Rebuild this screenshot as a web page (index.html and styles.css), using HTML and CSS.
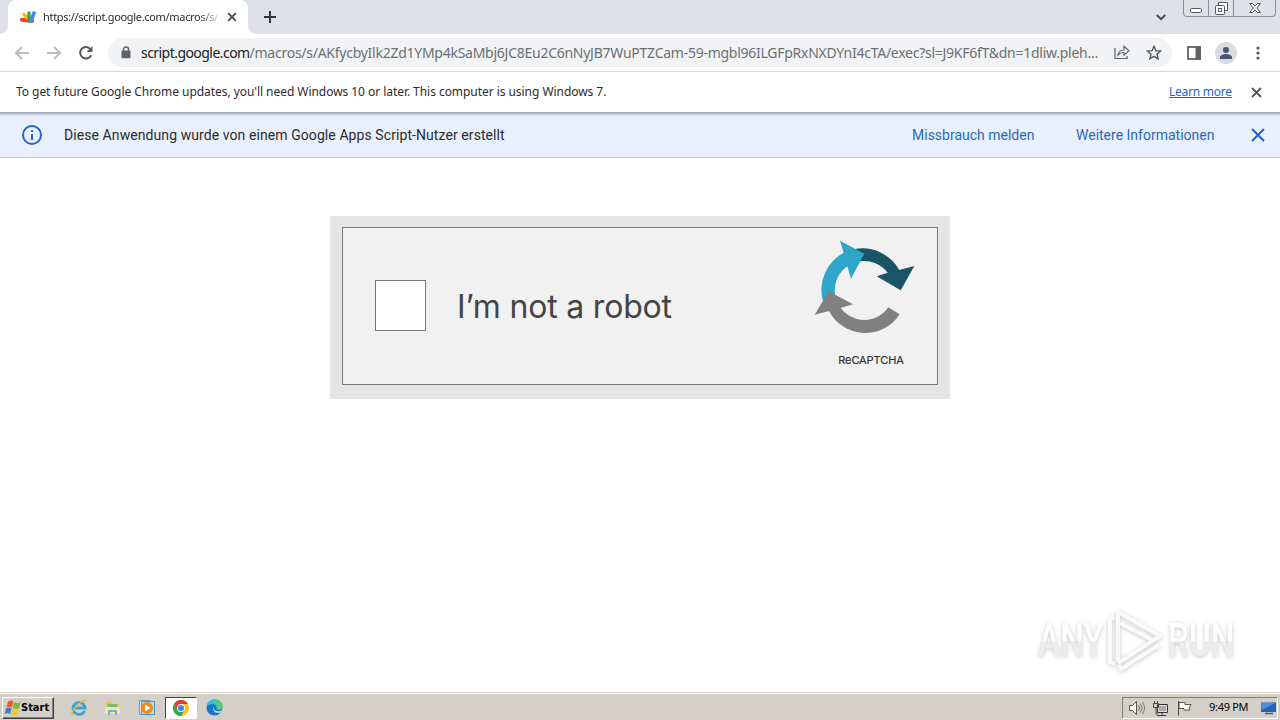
FILE: index.html
```
<!DOCTYPE html>
<html lang="de">

<head>
    <meta charset="UTF-8">
    <meta name="viewport" content="width=device-width, initial-scale=1">
    <title>script.google.com</title>
    <link rel="stylesheet" href="styles.css">
</head>

<body>

    <header class="tabstrip">
        <div class="tab">
            <svg class="favicon" width="16" height="14" viewBox="0 0 16 14">
                <path d="M2 9.800 12 11" stroke="#ea4335" stroke-width="4" stroke-linecap="round" />
                <path d="M4 4.500 11 11" stroke="#fbbc04" stroke-width="3.400" stroke-linecap="round" />
                <path d="M9 3v8" stroke="#34a853" stroke-width="3.400" stroke-linecap="round" />
                <path d="M14 3l-3 8" stroke="#4285f4" stroke-width="3.600" stroke-linecap="round" />
            </svg>
            <span class="tab-title">https://script.google.com/macros/s/</span>
            <svg class="tab-close" width="10" height="10" viewBox="0 0 10 10">
                <path d="M1.200 1.200l7.600 7.600M8.800 1.200l-7.600 7.600" />
            </svg>
        </div>
        <svg class="new-tab" width="12" height="12" viewBox="0 0 12 12">
            <path d="M6 0v12M0 6h12" />
        </svg>
        <svg class="tab-search" width="10" height="7" viewBox="0 0 10 7">
            <path d="M.8 1 5 5.200 9.200 1" />
        </svg>
        <div class="window-buttons">
            <span class="win-btn">
                <svg width="12" height="5" viewBox="0 0 12 5"><rect x=".5" y=".5" width="11" height="4" rx="1" /></svg>
            </span>
            <span class="win-btn">
                <svg width="13" height="13" viewBox="0 0 13 13">
                    <path d="M3.500 3.500v-3h9v8h-3" />
                    <rect x=".5" y="3.500" width="9" height="9" rx="1" />
                    <rect x="3.500" y="6.500" width="3" height="3" />
                </svg>
            </span>
            <span class="win-btn wide">
                <svg width="12" height="10" viewBox="0 0 12 10">
                    <path d="M.7.500h3L6 3 8.300.500h3L7.800 5l3.500 4.500h-3L6 7 3.700 9.500h-3L4.200 5z" />
                </svg>
            </span>
        </div>
    </header>

    <div class="toolbar">
        <svg class="nav-icon off" width="16" height="14" viewBox="0 0 16 14"><path d="M15 7H2M8 1 2 7l6 6" /></svg>
        <svg class="nav-icon off" width="16" height="14" viewBox="0 0 16 14"><path d="M1 7h13M8 1l6 6-6 6" /></svg>
        <svg class="nav-icon reload" width="16" height="16" viewBox="0 0 16 16">
            <path d="M13.200 10.200A5.800 5.800 0 1 1 12.400 4" />
            <path class="solid" d="M14.500 1v6h-6z" />
        </svg>
        <div class="address">
            <svg class="lock" width="10" height="13" viewBox="0 0 10 13">
                <path d="M2.500 6V3.500a2.500 2.500 0 0 1 5 0V6" fill="none" stroke="#5f6368" stroke-width="1.400" />
                <rect x=".5" y="4.600" width="9" height="7.600" rx="1" fill="#5f6368" />
            </svg>
            <span class="url"><b>script.google.com</b>/macros/s/AKfycbyIlk2Zd1YMp4kSaMbj6JC8Eu2C6nNyJB7WuPTZCam-59-mgbl96ILGFpRxNXDYnI4cTA/exec?sl=J9KF6fT&amp;dn=1dliw.pleh...</span>
            <svg class="share" width="16" height="15" viewBox="0 0 16 15">
                <path d="M1 3v10.500h12V11" />
                <path d="M4 10c.5-3.500 2.500-5 6-5V1.300L15 5.800 10 10.200V7.500C7.500 7.500 5.500 8.200 4 10z" />
            </svg>
            <svg class="star" width="16" height="15" viewBox="0 0 16 15">
                <path d="M8 1.300l1.900 4.400 4.700.4-3.600 3.100 1.100 4.600L8 11.400l-4.100 2.400L5 9.200 1.400 6.100l4.700-.4z" />
            </svg>
        </div>
        <svg class="panel-icon" width="14" height="14" viewBox="0 0 14 14">
            <rect x="1" y="1" width="12" height="12" fill="none" stroke="#5f6368" stroke-width="1.800" />
            <path d="M8.500 0H14v14H8.500z" fill="#5f6368" />
        </svg>
        <div class="avatar">
            <svg width="14" height="12" viewBox="0 0 14 12">
                <circle cx="7" cy="3" r="3" />
                <path d="M1 12V10c0-2 4-3 6-3s6 1 6 3v2z" />
            </svg>
        </div>
        <svg class="menu-icon" width="4" height="14" viewBox="0 0 4 14">
            <circle cx="2" cy="2" r="1.600" />
            <circle cx="2" cy="7" r="1.600" />
            <circle cx="2" cy="12" r="1.600" />
        </svg>
    </div>

    <div class="infobar">
        <span class="info-text">To get future Google Chrome updates, you'll need Windows 10 or later. This computer is using Windows 7.</span>
        <a class="learn-more">Learn more</a>
        <svg class="info-close" width="11" height="11" viewBox="0 0 11 11">
            <path d="M1 1l9 9M10 1l-9 9" />
        </svg>
    </div>

    <div class="banner">
        <svg class="banner-icon" width="20" height="20" viewBox="0 0 20 20">
            <circle cx="10" cy="10" r="9" />
            <path d="M10 9v6M10 5v2" />
        </svg>
        <span class="banner-text">Diese Anwendung wurde von einem Google Apps Script-Nutzer erstellt</span>
        <a class="report">Missbrauch melden</a>
        <a class="more">Weitere Informationen</a>
        <svg class="banner-close" width="14" height="14" viewBox="0 0 14 14">
            <path d="M1 1l12 12M13 1 1 13" />
        </svg>
    </div>

    <main class="page">
        <div class="captcha">
            <div class="captcha-inner">
                <div class="checkbox"></div>
                <span class="captcha-label">I’m not a robot</span>
                <div class="captcha-logo">
                    <svg width="102" height="94" viewBox="42 60 306 282">
                        <path fill="#1b5367" d="M165 87A128 128 0 0 1 298 150L343 138 302 211 230 169 263 158A88 88 0 0 0 180 124z" />
                        <path fill="#2ea5c9" d="M68 241A128 128 0 0 1 131 98L120 62 193 101 153 176 142 139A88 88 0 0 0 105 224z" />
                        <path fill="#808080" d="M86 214L159 253 122 264A88 88 0 0 0 265 262L299 283A123 123 0 0 1 87 273L44 284z" />
                    </svg>
                    <span>ReCAPTCHA</span>
                </div>
            </div>
        </div>
    </main>

    <div class="watermark">
        <span class="mark-text any">ANY</span>
        <svg width="58" height="64" viewBox="0 0 58 64">
            <path d="M10 9 5 12v42l5 2M14 57l2 4 38-24" />
            <path d="M13 54V4l42 24-42 27M15 15l34 18" />
        </svg>
        <span class="mark-text run">RUN</span>
    </div>

    <footer class="taskbar">
        <div class="start">
            <svg width="17" height="16" viewBox="0 0 17 16">
                <path fill="#e65b2e" d="M4 1.500q3-2 5.500 0L8 7.500q-3-1.500-5.500 0z" />
                <path fill="#7bb843" d="M10.200 2q3 2 6.300 0L15 8q-3 2-6.300 0z" />
                <path fill="#4280c4" d="M2.200 8.200q3-1.500 5.500 0L6.200 14q-3-1.500-5.700 0z" />
                <path fill="#f7c331" d="M8.500 8.700q3 2 6.300 0l-1.500 6q-3 2-6.300 0z" />
            </svg>
            <span>Start</span>
        </div>
        <div class="launch">
            <svg width="18" height="18" viewBox="0 0 18 18">
                <path d="M14.500 12A6 6 0 1 1 15 9H5" fill="none" stroke="#35a5dc" stroke-width="2.800" />
                <path d="M2.500 16C-.5 13 12-.5 16.500 2" fill="none" stroke="#e9b93b" stroke-width="1.500" />
            </svg>
            <svg width="18" height="18" viewBox="0 0 18 18">
                <path d="M2 3h5l1 2h7v10H2z" fill="#e8c55c" />
                <path d="M4 5h9v4H4z" fill="#7db87a" />
                <path d="M1 8h15v7H1z" fill="#f8e69c" />
                <path d="M4 16v-5h9v5h-2v-3H6v3z" fill="#69b5dc" />
            </svg>
            <svg width="18" height="18" viewBox="0 0 18 18">
                <path d="M1.500 1.500h11v14h-11z" fill="#d8ecf8" stroke="#5da3d2" />
                <path d="M3.500 2.500h13v13h-13z" fill="#b9ddf0" stroke="#4c94c8" />
                <circle cx="9" cy="9" r="6" fill="#f28a1c" />
                <path d="M7 5.500v7L12.500 9z" fill="#fff" />
            </svg>
        </div>
        <div class="task-active">
            <svg width="16" height="16" viewBox="0 0 16 16">
                <circle cx="8" cy="8" r="8" fill="#fbc116" />
                <path fill="#e33b2e" d="M1.070 4A8 8 0 0 1 14.930 4H8L4.540 10z" />
                <path fill="#2da94f" d="M1.070 4A8 8 0 0 0 8 16L11.460 10 8 12 4.540 10z" />
                <circle cx="8" cy="8" r="4" fill="#fff" />
                <circle cx="8" cy="8" r="3.100" fill="#4285f4" />
            </svg>
        </div>
        <svg class="edge" width="17" height="17" viewBox="0 0 17 17">
            <circle cx="8.500" cy="8.500" r="8" fill="#1677c8" />
            <path fill="#39bdd0" d="M.5 8A8 8 0 0 1 9 .5c5 0 7.500 3.500 7.500 6.500 0 2.500-2 4-4 4-1.500 0-2.500-.5-2-1.500C11.500 5 4 3 .5 8z" />
            <path fill="#5ccd69" d="M10 .6c4 .3 6.500 3.400 6.500 6.400 0 2.500-2 4-4 4z" />
            <path fill="#d5d2ca" d="M8 8c-1 4 3 5 9 3.500V13l-2 .5C9 15.500 5.500 11 8 8z" />
        </svg>
        <div class="tray">
            <svg width="17" height="16" viewBox="0 0 17 16">
                <path d="M1.500 5.500h3l4-4v13l-4-4h-3z" fill="#f5f5f5" stroke="#555" />
                <path d="M10.500 5q2 3 0 6M12.500 3.500q3 4.500 0 9M14.500 2q4 6 0 12" fill="none" stroke="#777" />
            </svg>
            <svg width="17" height="16" viewBox="0 0 17 16">
                <path d="M5.500 4.500h10v8h-10z" fill="#ddd" stroke="#333" />
                <path d="M7 6h7v5H7z" fill="#aaa" />
                <path d="M5 15.500h9M10 13v2M1.500 3.500h5v4h-5zM2.500 1v2M5.500 1v2M4 8v6h2" fill="none" stroke="#444" />
            </svg>
            <svg width="17" height="16" viewBox="0 0 17 16">
                <path d="M2.500 1v14.500" stroke="#444" />
                <path d="M3 2.500h6v2h6l-2 3.500 1 2H8V8.500H3z" fill="#fff" stroke="#555" />
            </svg>
            <span class="clock">9:49 PM</span>
            <svg width="17" height="16" viewBox="0 0 17 16">
                <path d="M1 2.500h15v9.500H1z" fill="#2463b8" />
                <path d="M1 3h14L2 10z" fill="#4b91dd" />
                <path d="M5 13.500h8" stroke="#38567a" stroke-width="1.500" />
            </svg>
        </div>
    </footer>

</body>

</html>
```
FILE: styles.css
```
* {
    box-sizing: border-box;
}

body {
    margin: 0;
    width: 1280px;
    height: 720px;
    overflow: hidden;
    display: flex;
    flex-direction: column;
    background: #fff;
    font-family: "Noto Sans", sans-serif;
    color: #2b2c30;
}

svg {
    display: block;
    flex: none;
    fill: none;
}

span,
a {
    white-space: nowrap;
}

/* tabs */
.tabstrip {
    height: 34px;
    flex: none;
    display: flex;
    align-items: center;
    background: #dee1e6;
}

.tab {
    position: relative;
    width: 240px;
    height: 34px;
    margin-left: 8px;
    padding-left: 12px;
    display: flex;
    align-items: center;
    background: #fff;
    border-radius: 8px 8px 0 0;
}

.tab::before,
.tab::after {
    content: "";
    position: absolute;
    bottom: 0;
    width: 8px;
    height: 8px;
}

.tab::before {
    left: -8px;
    background: radial-gradient(circle at 0 0, transparent 7.5px, #fff 8px);
}

.tab::after {
    right: -8px;
    background: radial-gradient(circle at 100% 0, transparent 7.5px, #fff 8px);
}

.tab-title {
    width: 176px;
    margin: -2px 0 0 7px;
    font-size: 11px;
    letter-spacing: -0.32px;
    -webkit-mask-image: linear-gradient(to right, #000 155px, transparent 180px);
}

.tab-close {
    margin-left: 8px;
    stroke: #45484c;
    stroke-width: 1.8;
}

.new-tab {
    margin-left: 16px;
    stroke: #303338;
    stroke-width: 2;
}

.tab-search {
    margin-left: 880px;
    stroke: #45484c;
    stroke-width: 1.8;
}

.window-buttons {
    height: 17px;
    margin-left: 17px;
    align-self: flex-start;
    display: flex;
    border: 1px solid #8c9097;
    border-top: none;
    border-radius: 0 0 4px 4px;
}

.win-btn {
    width: 25px;
    display: flex;
    align-items: center;
    justify-content: center;
    border-right: 1px solid #8c9097;
}

.win-btn svg {
    fill: #fff;
    stroke: #54585f;
}

.win-btn:first-child svg {
    margin-top: 4px;
}

.wide {
    width: 41px;
    border-right: none;
}

/* toolbar */
.toolbar {
    height: 38px;
    flex: none;
    display: flex;
    align-items: center;
    padding-left: 14px;
    border-bottom: 1px solid #d9dbde;
}

.nav-icon {
    margin-right: 16px;
    stroke: #55585d;
    stroke-width: 2;
}

.off {
    stroke: #babcbe;
}

.reload {
    margin-right: 14px;
}

.solid {
    fill: #55585d;
    stroke: none;
}

.address {
    width: 1064px;
    height: 29px;
    display: flex;
    align-items: center;
    padding-left: 13px;
    border-radius: 15px;
    background: #f1f3f4;
}

.url {
    width: 966px;
    margin-left: 10px;
    font-size: 14px;
    letter-spacing: -0.26px;
    color: #6b7075;
}

.url b {
    font-weight: normal;
    letter-spacing: -0.55px;
    color: #202124;
}

.share {
    margin-left: 7px;
    stroke: #5f6368;
    stroke-width: 1.2;
}

.star {
    margin-left: 16px;
    stroke: #55585d;
    stroke-width: 1.4;
}

.panel-icon {
    margin-left: 15px;
}

.avatar {
    width: 22px;
    height: 22px;
    margin-left: 14px;
    display: flex;
    align-items: center;
    justify-content: center;
    border-radius: 50%;
    background: #dadce0;
}

.avatar svg {
    fill: #4a5673;
}

.menu-icon {
    margin-left: 19px;
    fill: #55585d;
}

/* update notice */
.infobar {
    height: 40px;
    flex: none;
    display: flex;
    align-items: center;
    padding-left: 16px;
    font-size: 12px;
}

.info-text {
    width: 1153px;
    margin-top: -2px;
    letter-spacing: -0.05px;
}

.learn-more {
    width: 63px;
    margin-top: -2px;
    letter-spacing: -0.25px;
    color: #1a68c8;
    text-decoration: underline;
}

.info-close {
    margin-left: 19px;
    stroke: #505357;
    stroke-width: 1.8;
}

/* apps script banner */
.banner {
    height: 46px;
    flex: none;
    display: flex;
    align-items: center;
    padding-left: 22px;
    border-bottom: 1px solid #c5c9d8;
    background: linear-gradient(#a3adb9 0, #b6c0cf 2px, #d8e0ee 3px, #e8f0fe 5px);
    font-family: Roboto, sans-serif;
    font-size: 14px;
}

.banner-icon {
    stroke: #2863c8;
    stroke-width: 2;
}

.banner-text {
    width: 848px;
    margin-left: 22px;
    letter-spacing: 0.08px;
}

.report {
    width: 164px;
}

.more {
    width: 140px;
}

.report,
.more {
    color: #2a68c0;
}

.banner-close {
    margin-left: 35px;
    stroke: #1f62d0;
    stroke-width: 2;
}

/* captcha */
.page {
    flex: 1;
    padding-top: 58px;
}

.captcha {
    width: 620px;
    height: 183px;
    margin: 0 auto;
    padding: 11px 12px 14px;
    background: #e5e5e5;
}

.captcha-inner {
    height: 158px;
    display: flex;
    align-items: center;
    padding-left: 32px;
    border: 1px solid #777;
    background: #f1f1f1;
}

.checkbox {
    width: 51px;
    height: 51px;
    margin-bottom: 2px;
    border: 1px solid #777;
    background: #fff;
}

.captcha-label {
    width: 357px;
    margin-left: 31px;
    font-family: Inter, sans-serif;
    font-size: 32px;
    letter-spacing: -0.2px;
    color: #444;
}

.captcha-logo {
    width: 102px;
    margin-bottom: 6px;
    display: flex;
    flex-direction: column;
    align-items: center;
    font-family: Inter, sans-serif;
    font-size: 11px;
    color: #333;
}

.captcha-logo span {
    margin: 19px 0 0 12px;
    letter-spacing: -0.1px;
    line-height: 14px;
    -webkit-text-stroke: 0.2px #333;
}

.watermark {
    position: absolute;
    left: 1038px;
    top: 608px;
    display: flex;
    align-items: center;
    filter: drop-shadow(0 1px 2px rgba(0, 0, 0, 0.22));
}

.watermark svg {
    margin: 0 5px 0 3px;
    stroke: #fafafa;
    stroke-width: 4;
    stroke-linejoin: round;
}

.mark-text {
    width: 63px;
    font-family: Roboto, sans-serif;
    font-size: 47px;
    font-weight: 500;
    line-height: 64px;
    color: transparent;
    background: linear-gradient(#fff 52%, #ededed 52%);
    -webkit-background-clip: text;
    transform: scaleX(0.71);
    transform-origin: left;
}

.any {
    width: 64px;
}

.mark-text {
    display: inline-block;
    padding-right: 30px;
    margin-right: -30px;
    box-sizing: content-box;
}

/* taskbar */
.taskbar {
    height: 28px;
    flex: none;
    display: flex;
    align-items: center;
    padding: 2px 2px 0;
    border-top: 1px solid #d4d0c8;
    background: #d4d0c8;
    box-shadow: inset 0 1px #fff;
}

.start {
    width: 52px;
    height: 22px;
    display: flex;
    align-items: center;
    padding-left: 1px;
    border: 1px solid;
    border-color: #fff #404040 #404040 #fff;
    box-shadow: inset -1px -1px #808080;
    font-family: "DejaVu Sans Condensed", "DejaVu Sans", sans-serif;
    font-size: 11px;
    font-weight: bold;
    color: #000;
}

.start span {
    margin-top: -1px;
}

.launch {
    display: flex;
    gap: 16px;
    margin-left: 16px;
}

.task-active {
    width: 32px;
    height: 22px;
    margin-left: 9px;
    display: flex;
    align-items: center;
    justify-content: center;
    border: 1px solid;
    border-color: #404040 #fff #fff #404040;
    background: #fff;
}

.edge {
    margin-left: 9px;
}

.tray {
    width: 156px;
    height: 22px;
    margin-left: auto;
    display: flex;
    align-items: center;
    gap: 7px;
    padding-left: 5px;
    border: 1px solid;
    border-color: #808080 #fff #fff #808080;
}

.clock {
    width: 42px;
    margin: -2px 3px 0 9px;
    font-size: 11px;
    letter-spacing: -0.3px;
    color: #000;
}
```
